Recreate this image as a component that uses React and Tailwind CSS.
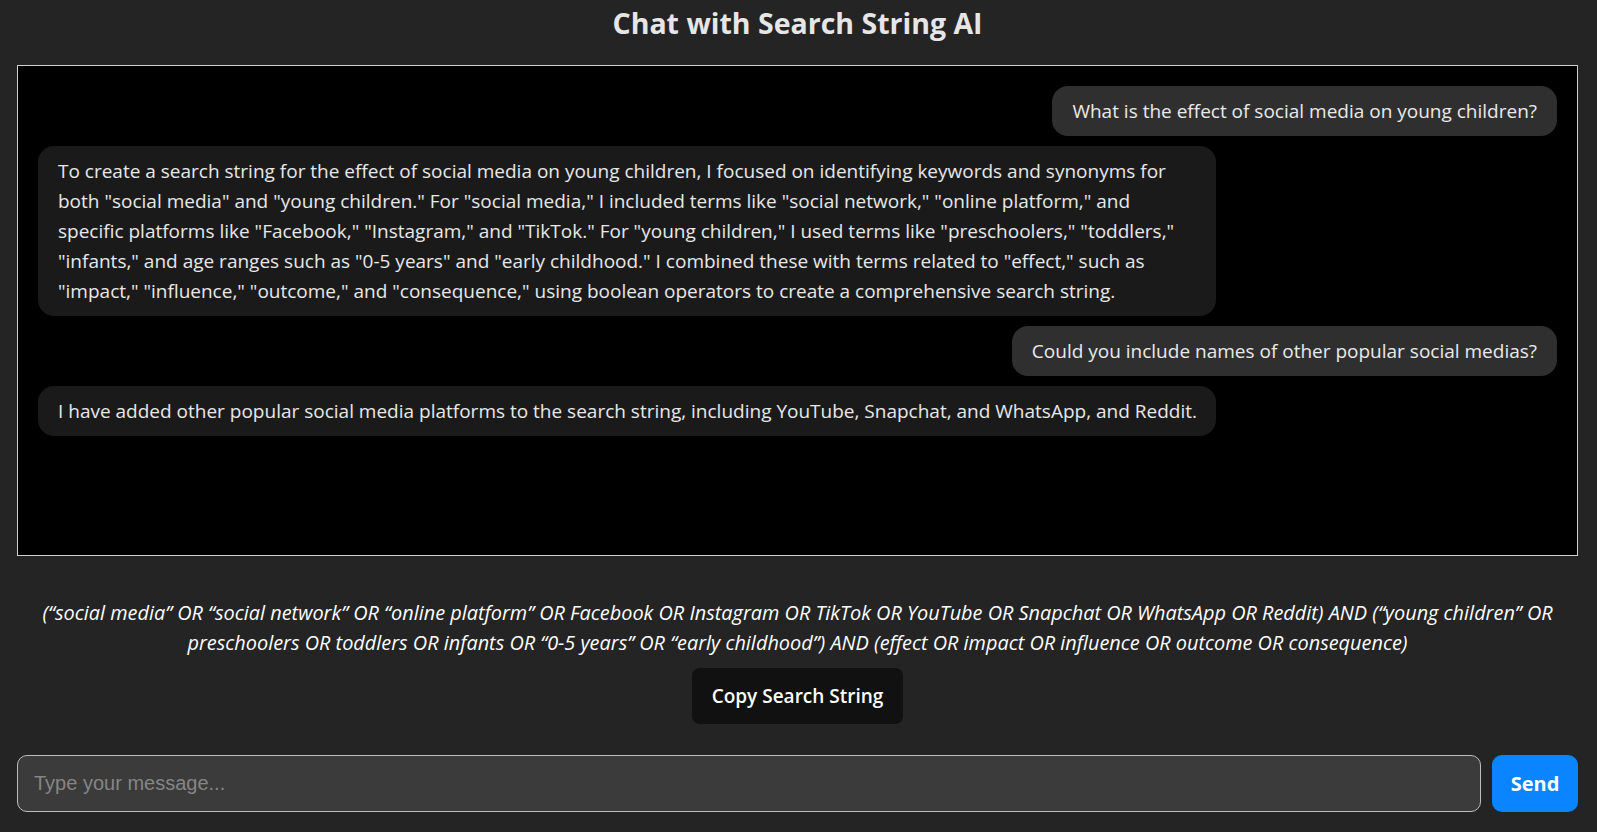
import React, { useState } from 'react';

const font = { fontFamily: '"Open Sans", "Noto Sans", Arial, sans-serif' };

const messages = [
  { role: 'user', lines: ['What is the effect of social media on young children?'] },
  {
    role: 'ai',
    wide: true,
    lines: [
      'To create a search string for the effect of social media on young children, I focused on identifying keywords and synonyms for',
      'both "social media" and "young children." For "social media," I included terms like "social network," "online platform," and',
      'specific platforms like "Facebook," "Instagram," and "TikTok." For "young children," I used terms like "preschoolers," "toddlers,"',
      '"infants," and age ranges such as "0-5 years" and "early childhood." I combined these with terms related to "effect," such as',
      '"impact," "influence," "outcome," and "consequence," using boolean operators to create a comprehensive search string.',
    ],
  },
  { role: 'user', lines: ['Could you include names of other popular social medias?'] },
  {
    role: 'ai',
    lines: ['I have added other popular social media platforms to the search string, including YouTube, Snapchat, and WhatsApp, and Reddit.'],
  },
];

const searchLines = [
  '(\u201Csocial media\u201D OR \u201Csocial network\u201D OR \u201Conline platform\u201D OR Facebook OR Instagram OR TikTok OR YouTube OR Snapchat OR WhatsApp OR Reddit) AND (\u201Cyoung children\u201D OR',
  'preschoolers OR toddlers OR infants OR \u201C0-5 years\u201D OR \u201Cearly childhood\u201D) AND (effect OR impact OR influence OR outcome OR consequence)',
];

export default function App() {
  const [input, setInput] = useState('');

  return (
    <div className="h-screen bg-[#242424] text-white/90 flex flex-col px-[17px] pr-[19px]" style={font}>
      <h1 className="h-[65px] flex items-center justify-center text-[28.5px] font-bold text-[#e6e6e6] pb-[19px]">
        Chat with Search String AI
      </h1>

      <div className="h-[491px] bg-black border border-[#cfcfcf] p-5 flex flex-col gap-[10px] overflow-y-auto">
        {messages.map((m, i) => (
          <div
            key={i}
            className={`rounded-[16px] px-5 py-[10px] text-[19px] leading-[30px] whitespace-nowrap ${
              m.role === 'user'
                ? 'self-end bg-[#2f2f2f]'
                : 'self-start bg-[#1a1a1a] max-w-[1178px]'
            } ${m.wide ? 'w-[1178px]' : ''}`}
          >
            {m.lines.map((l, j) => (
              <div key={j}>{l}</div>
            ))}
          </div>
        ))}
      </div>

      <div className="mt-[42px] text-center italic text-[19.9px] leading-[30px] text-white">
        {searchLines.map((l, j) => (
          <div key={j} className="whitespace-nowrap">{l}</div>
        ))}
      </div>

      <div className="flex justify-center mt-[10px]">
        <button className="h-[56px] px-5 rounded-lg bg-[#111111] text-white text-[19px] font-semibold">
          Copy Search String
        </button>
      </div>

      <div className="flex gap-[11px] mt-auto mb-5">
        <input
          value={input}
          onChange={(e) => setInput(e.target.value)}
          placeholder="Type your message..."
          className="flex-1 h-[57px] rounded-[10px] border border-[#bdbdbd] bg-[#3b3b3b] px-4 text-[20px] text-white placeholder:text-[#858585] outline-none"
          style={{ fontFamily: 'Arial, "Liberation Sans", sans-serif' }}
        />
        <button className="w-[86px] h-[57px] rounded-[10px] bg-[#0a84ff] text-white text-[20px] font-bold">
          Send
        </button>
      </div>
    </div>
  );
}
